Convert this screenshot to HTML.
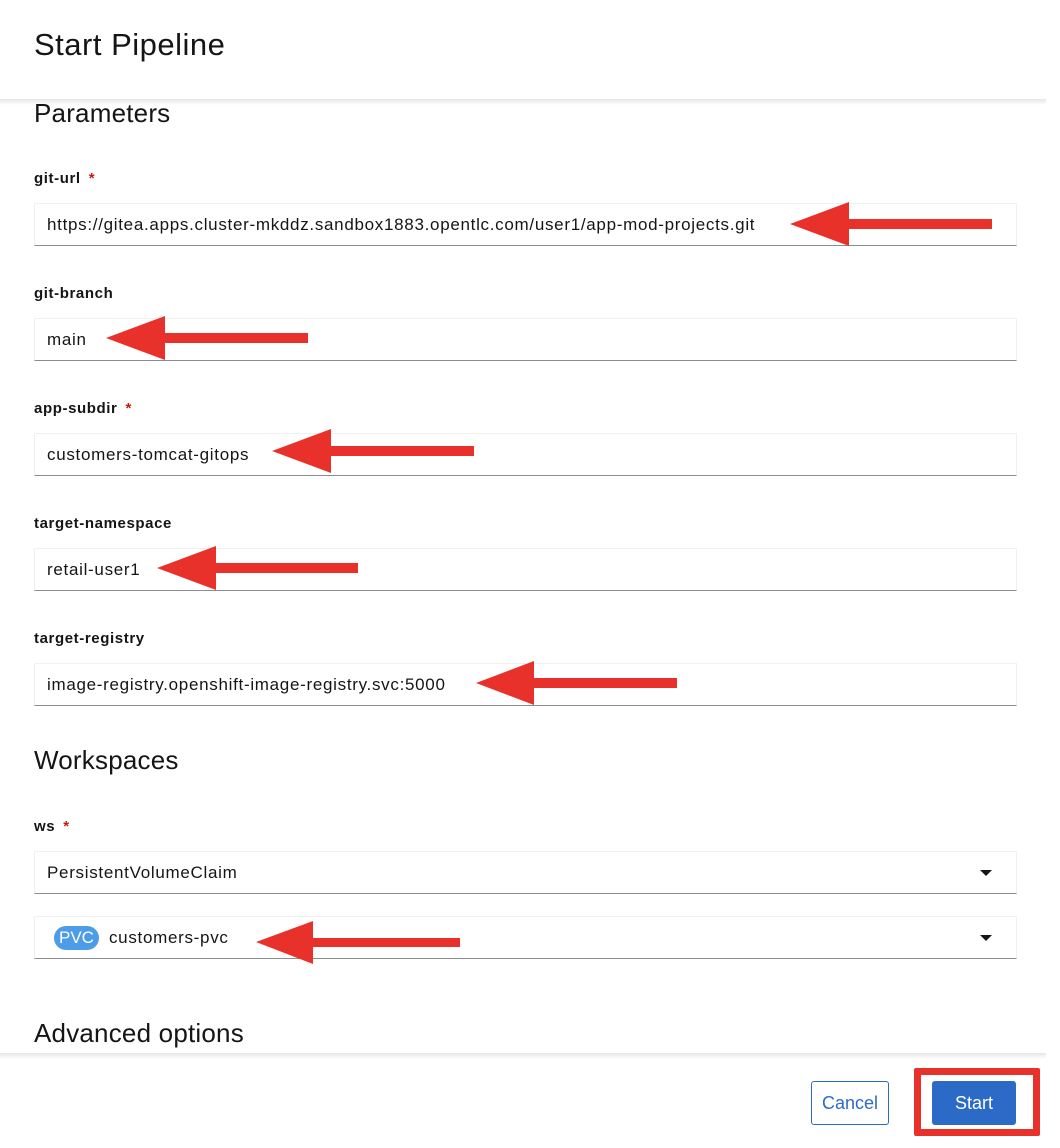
<!DOCTYPE html>
<html><head><style>
body{margin:0;width:1060px;height:1148px;background:#fff;font-family:"Liberation Sans",sans-serif;color:#151515;position:relative;overflow:hidden}
.a{position:absolute}
h1{position:absolute;left:34px;top:27px;margin:0;font-size:31px;font-weight:400;letter-spacing:0.5px}
h2{position:absolute;left:34px;margin:0;font-size:26px;font-weight:400;letter-spacing:0.2px}
.lbl{position:absolute;left:34px;font-size:15px;font-weight:700;letter-spacing:0.6px}
.lbl i{color:#c9190b;font-style:normal;margin-left:8px}
.in{position:absolute;left:34px;width:983px;height:43px;border:1px solid #f0f0f0;border-bottom:1px solid #8a8d90;box-sizing:border-box;font-size:17px;letter-spacing:0.7px;padding-left:12px;line-height:42px}
.car{position:absolute;right:24px;top:18px;width:0;height:0;border-left:6px solid transparent;border-right:6px solid transparent;border-top:6px solid #151515}
.sh{position:absolute;left:0;width:1046px;height:6px;background:linear-gradient(#e6e6e6,#fff)}
</style></head><body>
<h1>Start Pipeline</h1>
<div class="sh" style="top:99px"></div>
<h2 style="top:98px">Parameters</h2>
<div class="lbl" style="top:170px">git-url<i>*</i></div>
<div class="in" style="top:203px">https://gitea.apps.cluster-mkddz.sandbox1883.opentlc.com/user1/app-mod-projects.git</div>
<div class="lbl" style="top:285px">git-branch</div>
<div class="in" style="top:318px">main</div>
<div class="lbl" style="top:400px">app-subdir<i>*</i></div>
<div class="in" style="top:433px">customers-tomcat-gitops</div>
<div class="lbl" style="top:515px">target-namespace</div>
<div class="in" style="top:548px">retail-user1</div>
<div class="lbl" style="top:630px">target-registry</div>
<div class="in" style="top:663px">image-registry.openshift-image-registry.svc:5000</div>
<h2 style="top:745px">Workspaces</h2>
<div class="lbl" style="top:818px">ws<i>*</i></div>
<div class="in" style="top:851px">PersistentVolumeClaim<div class="car"></div></div>
<div class="in" style="top:916px;padding-left:19px"><span style="display:inline-block;background:#4c9ce8;color:#fff;border-radius:12px;padding:0 5px;line-height:24px;font-size:17px;margin-right:10px;letter-spacing:0">PVC</span>customers-pvc<div class="car"></div></div>
<h2 style="top:1018px">Advanced options</h2>
<div class="sh" style="top:1053px"></div>
<div class="a" style="left:811px;top:1081px;width:78px;height:44px;border:1px solid #2b6bc7;border-radius:3px;box-sizing:border-box;color:#2b6bc7;font-size:18px;text-align:center;line-height:42px">Cancel</div>
<div class="a" style="left:914px;top:1068px;width:126px;height:68px;border:7px solid #e8312a;box-sizing:border-box;border-radius:2px"></div>
<div class="a" style="left:932px;top:1081px;width:84px;height:44px;background:#2b6bc7;border-radius:3px;color:#fff;font-size:18px;text-align:center;line-height:44px">Start</div>
<svg class="a" style="left:0;top:0" width="1060" height="1148">
<g fill="#e8312a">
<path d="M790 224 L849 202 L849 219 L992 219 L992 229 L849 229 L849 246Z"/>
<path d="M106 338 L165 316 L165 333 L308 333 L308 343 L165 343 L165 360Z"/>
<path d="M272 451 L331 429 L331 446 L474 446 L474 456 L331 456 L331 473Z"/>
<path d="M157 568 L216 546 L216 563 L358 563 L358 573 L216 573 L216 590Z"/>
<path d="M476 683 L534 661 L534 678 L677 678 L677 688 L534 688 L534 705Z"/>
<path d="M256 942 L313 921 L313 938 L460 938 L460 947 L313 947 L313 964Z"/>
</g></svg>
</body></html>
